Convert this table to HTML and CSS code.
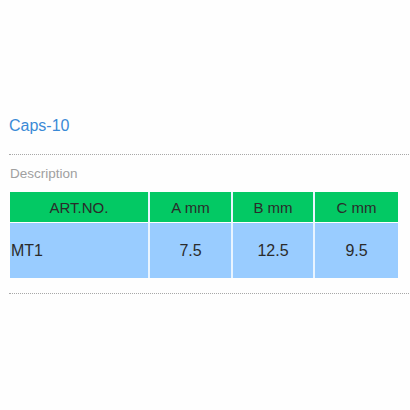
FILE: index.html
```html
<!DOCTYPE html>
<html>
<head>
<meta charset="utf-8">
<link rel="stylesheet" href="styles.css">
</head>
<body>
<div class="wrap">
  <h2 class="title">Caps-10</h2>
  <div class="rule rule-top"></div>
  <div class="desc">Description</div>
  <table class="spec">
    <thead>
      <tr>
        <th class="c1">ART.NO.</th>
        <th class="c2">A mm</th>
        <th class="c3">B mm</th>
        <th class="c4">C mm</th>
      </tr>
    </thead>
    <tbody>
      <tr>
        <td class="c1 left">MT1</td>
        <td class="c2">7.5</td>
        <td class="c3">12.5</td>
        <td class="c4">9.5</td>
      </tr>
    </tbody>
  </table>
  <div class="rule rule-bottom"></div>
</div>
</body>
</html>
```

FILE: styles.css
```css
html, body {
  margin: 0;
  padding: 0;
  background: #fefefe;
  overflow: hidden;
}
.wrap {
  padding: 117px 0 0 9px;
  font-family: "Liberation Sans", Arial, sans-serif;
}
.title {
  margin: 0;
  font-size: 16px;
  line-height: 18px;
  font-weight: normal;
  color: #3a8ad6;
}
.rule {
  border-top: 1px dotted #a8a8a8;
  width: 420px;
  height: 0;
}
.rule-top {
  margin-top: 19px;
}
.desc {
  margin-top: 11px;
  padding-left: 1px;
  font-size: 13.5px;
  line-height: 16px;
  color: #a0a0a0;
}
.spec {
  margin: 10px 0 0 1px;
  border-collapse: separate;
  border-spacing: 0;
  table-layout: fixed;
  width: 388px;
}
.spec th, .spec td {
  padding: 0;
  text-align: center;
  color: #2b2b2b;
  font-weight: normal;
}
.spec th {
  background: #03c964;
  height: 30px;
  font-size: 15px;
  border-bottom: 1px solid #fff;
}
.spec td {
  background: #99ccff;
  height: 55px;
  font-size: 16px;
}
.spec .c1 { width: 138px; }
.spec .c2 { width: 81px; border-left: 2px solid #e8f4ff; }
.spec .c3 { width: 80px; border-left: 2px solid #e8f4ff; }
.spec .c4 { width: 83px; border-left: 2px solid #e8f4ff; }
.spec td.left {
  text-align: left;
  padding-left: 1px;
}
.rule-bottom {
  margin-top: 15px;
}
```
